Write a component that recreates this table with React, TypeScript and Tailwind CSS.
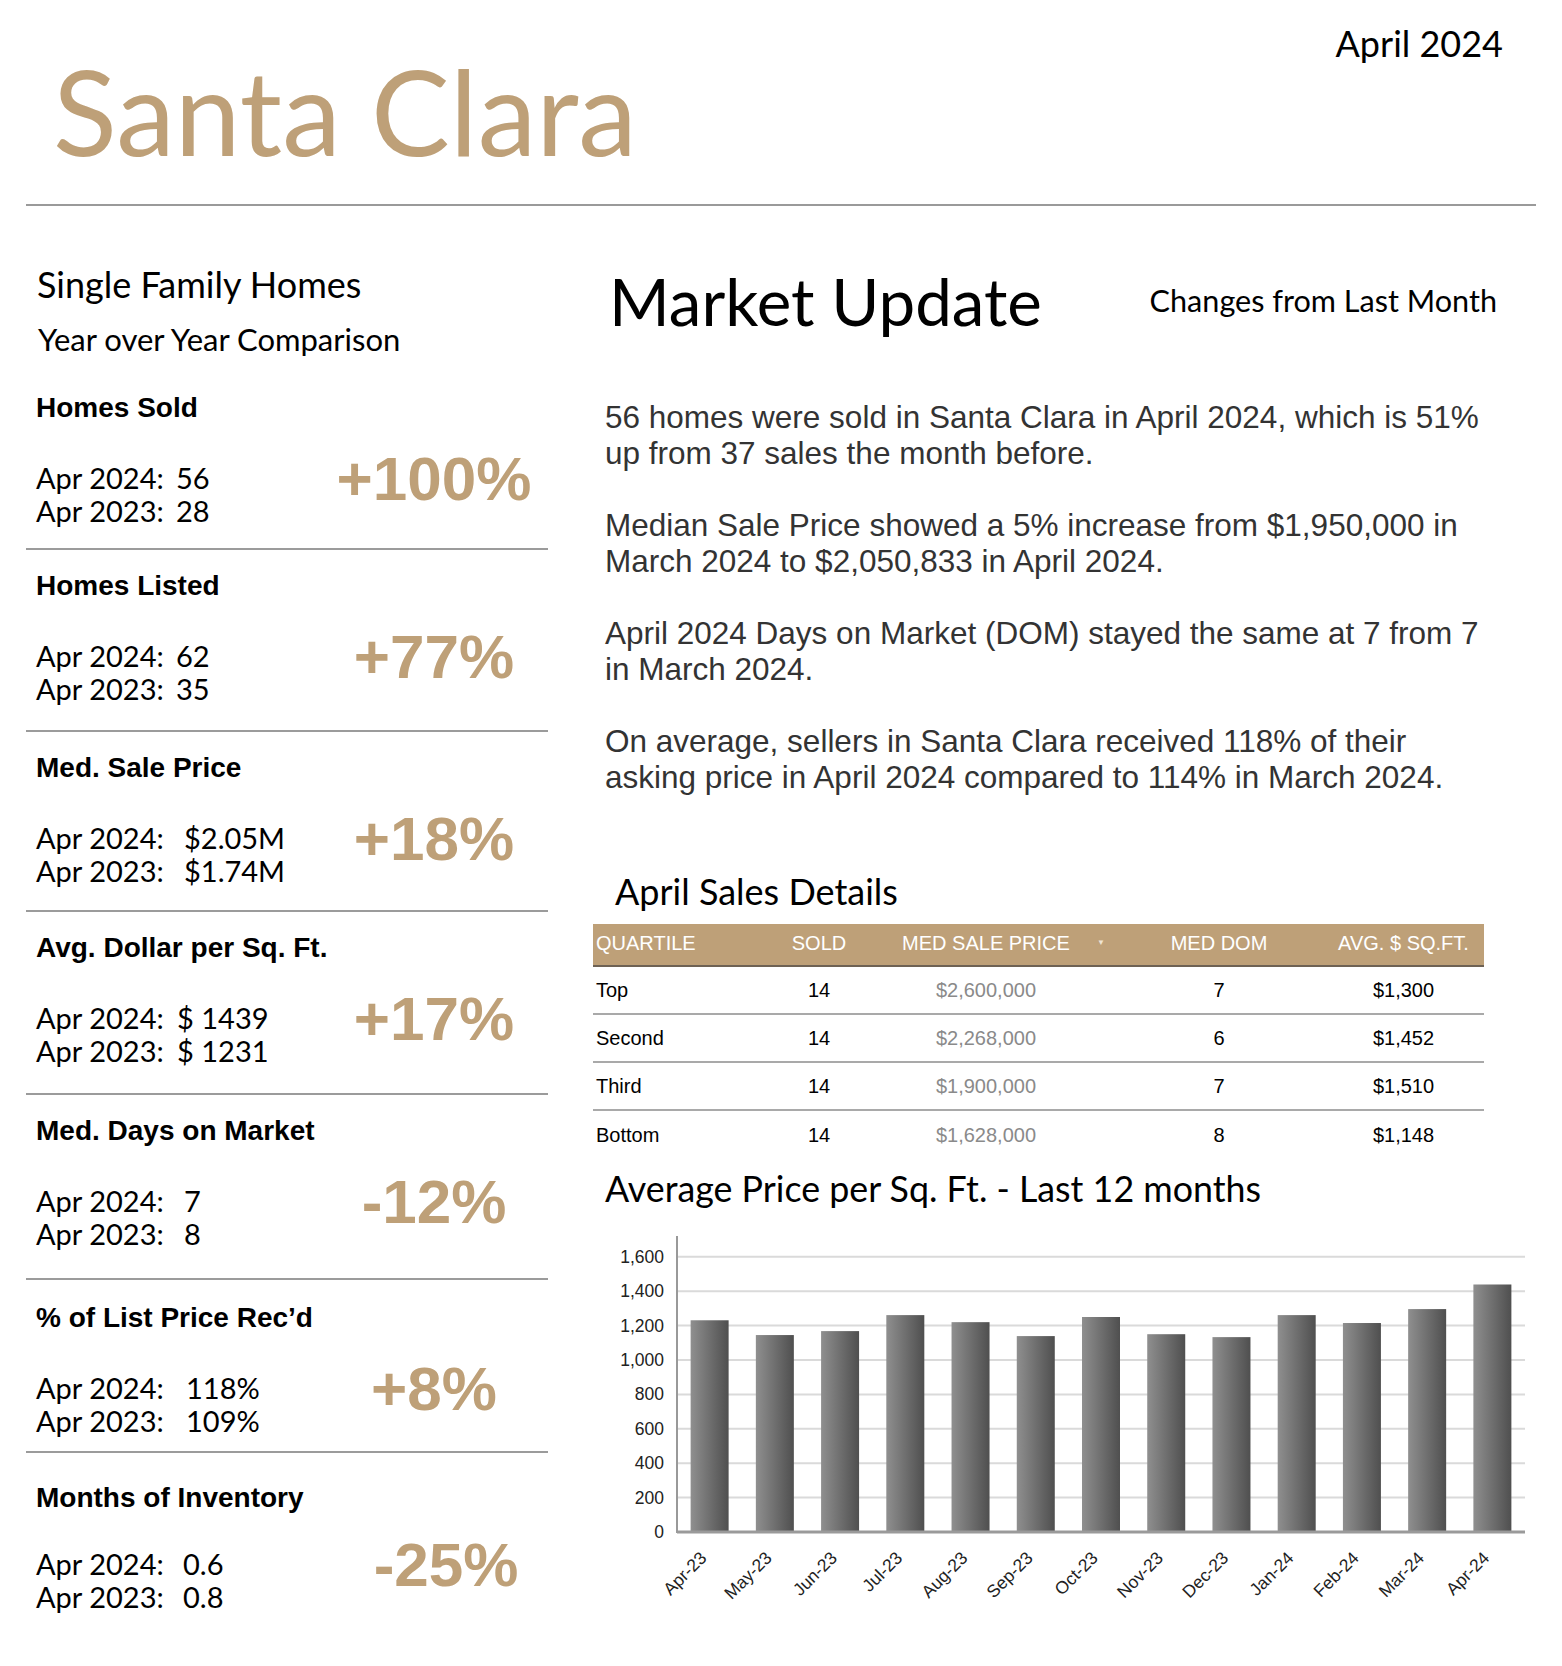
const cond = "font-['Lato',sans-serif]";
const arial = "font-['Liberation_Sans',Arial,sans-serif]";

const stats = [
  { title: 'Homes Sold', a: '56', b: '28', pct: '+100%', valCls: 'ml-0', pctCls: '', boxCls: 'pb-[21px]', gapCls: 'mt-[39px]' },
  { title: 'Homes Listed', a: '62', b: '35', pct: '+77%', valCls: 'ml-0', pctCls: '', boxCls: 'pt-[22px] pb-[25px]', gapCls: 'mt-[39px]' },
  { title: 'Med. Sale Price', a: '$2.05M', b: '$1.74M', pct: '+18%', valCls: 'ml-[8px]', pctCls: '', boxCls: 'pt-[22px] pb-[23px]', gapCls: 'mt-[39px]' },
  { title: 'Avg. Dollar per Sq. Ft.', a: '$ 1439', b: '$ 1231', pct: '+17%', valCls: 'ml-[1px]', pctCls: '', boxCls: 'pt-[22px] pb-[26px]', gapCls: 'mt-[39px]' },
  { title: 'Med. Days on Market', a: '7', b: '8', pct: '-12%', valCls: 'ml-[8px]', pctCls: '', boxCls: 'pt-[22px] pb-[28px]', gapCls: 'mt-[39px]' },
  { title: '% of List Price Rec’d', a: '118%', b: '109%', pct: '+8%', valCls: 'ml-[10px]', pctCls: '', boxCls: 'pt-[24px] pb-[14px]', gapCls: 'mt-[39px]' },
  { title: 'Months of Inventory', a: '0.6', b: '0.8', pct: '-25%', valCls: 'ml-[7px]', pctCls: 'pl-[24px]', boxCls: 'pt-[31px] pb-[20px]', gapCls: 'mt-[35px]' },
];

const rows = [
  { q: 'Top', sold: '14', price: '$2,600,000', dom: '7', sqft: '$1,300' },
  { q: 'Second', sold: '14', price: '$2,268,000', dom: '6', sqft: '$1,452' },
  { q: 'Third', sold: '14', price: '$1,900,000', dom: '7', sqft: '$1,510' },
  { q: 'Bottom', sold: '14', price: '$1,628,000', dom: '8', sqft: '$1,148' },
];

const months = ['Apr-23', 'May-23', 'Jun-23', 'Jul-23', 'Aug-23', 'Sep-23', 'Oct-23', 'Nov-23', 'Dec-23', 'Jan-24', 'Feb-24', 'Mar-24', 'Apr-24'];
const values = [1231, 1145, 1168, 1261, 1220, 1139, 1250, 1150, 1133, 1261, 1215, 1296, 1439];

function StatBlock({ s, last }: { s: (typeof stats)[number]; last: boolean }) {
  return (
    <div className={`pl-[10px] ${s.boxCls} ${last ? '' : 'border-b-2 border-[#9b9b9b]'}`}>
      <div className={`${arial} text-[28px] leading-[28px] font-bold text-black`}>{s.title}</div>
      <div className={`${s.gapCls} flex items-start`}>
        <div className={`${cond} w-[290px] text-[29px] leading-[33px] text-black`}>
          <div className="flex">
            <span className="w-[140px]">Apr 2024:</span>
            <span className={s.valCls}>{s.a}</span>
          </div>
          <div className="flex">
            <span className="w-[140px]">Apr 2023:</span>
            <span className={s.valCls}>{s.b}</span>
          </div>
        </div>
        <div className={`${arial} ${s.pctCls} -mt-[13px] w-[216px] text-center text-[62px] leading-[62px] font-bold text-[#bea078]`}>
          {s.pct}
        </div>
      </div>
    </div>
  );
}

function PriceChart() {
  const axisX = 80;
  const right = 928;
  const zeroY = 309;
  const k = 0.172;
  const step = (right - axisX) / 13;
  const ticks = [0, 200, 400, 600, 800, 1000, 1200, 1400, 1600];
  return (
    <svg width="942" height="420" className="block ml-[4px]" fontFamily="'Liberation Sans', Arial, sans-serif">
      <defs>
        <linearGradient id="bar" x1="0" x2="1" y1="0" y2="0">
          <stop offset="0%" stopColor="#8f8f8f" />
          <stop offset="100%" stopColor="#4f4f4f" />
        </linearGradient>
      </defs>
      {ticks.slice(1).map((t) => (
        <line key={t} x1={axisX} x2={right} y1={zeroY - t * k} y2={zeroY - t * k} stroke="#dadada" strokeWidth="2" />
      ))}
      {ticks.map((t) => (
        <text key={t} x={67} y={zeroY - t * k + 6} textAnchor="end" fontSize="17.5" fill="#222">
          {t.toLocaleString('en-US')}
        </text>
      ))}
      {values.map((v, i) => (
        <rect key={i} x={axisX + step * i + (step - 38) / 2} y={zeroY - v * k} width="38" height={v * k} fill="url(#bar)" />
      ))}
      <line x1={axisX} x2={axisX} y1={13} y2={zeroY + 1} stroke="#999" strokeWidth="2" />
      <line x1={axisX} x2={right} y1={zeroY} y2={zeroY} stroke="#9a9a9a" strokeWidth="3" />
      {months.map((m, i) => {
        const x = axisX + step * (i + 0.5) - 2;
        const y = zeroY + 27;
        return (
          <text key={m} x={x} y={y} textAnchor="end" fontSize="17.5" fill="#222" transform={`rotate(-45 ${x} ${y})`}>
            {m}
          </text>
        );
      })}
    </svg>
  );
}

export default function App() {
  return (
    <div className="min-h-[1666px] w-[1562px] bg-white text-black">
      {/* Header */}
      <header className="pl-[26px] pr-[26px] pt-[22px]">
        <div className="flex items-start justify-between">
          <h1 className={`${cond} ml-[27px] mt-[30px] text-[118px] leading-[118px] text-[#bea078]`}>Santa Clara</h1>
          <div className={`${cond} mr-[33px] mt-[3px] text-[36px] leading-[36px]`}>April 2024</div>
        </div>
        <div className="mt-[34px] h-[2px] bg-[#9a9a9a]" />
      </header>

      <main className="flex gap-[45px] pl-[26px] pr-[19px] pt-[57px]">
        {/* Left column */}
        <aside className="w-[522px] shrink-0">
          <div className={`${cond} mt-[3px] pl-[11px] text-[36px] leading-[36px]`}>Single Family Homes</div>
          <div className={`${cond} mt-[22px] pl-[12px] text-[31px] leading-[31px]`}>Year over Year Comparison</div>
          <div className="mt-[39px]">
            {stats.map((s, i) => (
              <StatBlock key={s.title} s={s} last={i === stats.length - 1} />
            ))}
          </div>
        </aside>

        {/* Right column */}
        <section className="flex-1">
          <div className="flex items-start justify-between">
            <h2 className={`${cond} ml-[16px] mt-[5px] text-[65.5px] leading-[65.5px]`}>Market Update</h2>
            <div className={`${cond} mr-[46px] mt-[22px] text-[30.6px] leading-[31px]`}>Changes from Last Month</div>
          </div>

          <div className={`${arial} ml-[12px] mt-[65px] flex flex-col gap-[36px] whitespace-nowrap text-[31.5px] leading-[36px] text-[#333]`}>
            <p>
              56 homes were sold in Santa Clara in April 2024, which is 51%
              <br />
              up from 37 sales the month before.
            </p>
            <p>
              Median Sale Price showed a 5% increase from $1,950,000 in
              <br />
              March 2024 to $2,050,833 in April 2024.
            </p>
            <p>
              April 2024 Days on Market (DOM) stayed the same at 7 from 7
              <br />
              in March 2024.
            </p>
            <p>
              On average, sellers in Santa Clara received 118% of their
              <br />
              asking price in April 2024 compared to 114% in March 2024.
            </p>
          </div>

          <h3 className={`${cond} ml-[22px] mt-[78px] text-[36px] leading-[36px]`}>April Sales Details</h3>

          <div className={`${arial} mt-[15px] w-[891px] text-[20px]`}>
            <div className="grid h-[43px] grid-cols-[144px_164px_170px_48px_200px_165px] items-center border-b-2 border-[#6e6254] bg-[#bea078] pb-[3px] text-white">
              <div className="pl-[3px]">QUARTILE</div>
              <div className="text-center">SOLD</div>
              <div className="text-center">MED SALE PRICE</div>
              <div className="pl-[26px] text-[8px] text-[#efe4d4]">▼</div>
              <div className="text-center">MED DOM</div>
              <div className="pl-[4px] text-center">AVG. $ SQ.FT.</div>
            </div>
            {rows.map((r, i) => (
              <div
                key={r.q}
                className={`grid h-[48px] grid-cols-[144px_164px_170px_48px_200px_165px] items-center ${
                  i < rows.length - 1 ? 'border-b-2 border-[#a9a9a9]' : ''
                }`}
              >
                <div className="pl-[3px]">{r.q}</div>
                <div className="text-center">{r.sold}</div>
                <div className="text-center text-[#8a8a8a]">{r.price}</div>
                <div />
                <div className="text-center">{r.dom}</div>
                <div className="pl-[4px] text-center">{r.sqft}</div>
              </div>
            ))}
          </div>

          <h3 className={`${cond} ml-[12px] mt-[12px] text-[35.8px] leading-[36px]`}>Average Price per Sq. Ft. - Last 12 months</h3>
          <div className="mt-[16px]">
            <PriceChart />
          </div>
        </section>
      </main>
    </div>
  );
}
